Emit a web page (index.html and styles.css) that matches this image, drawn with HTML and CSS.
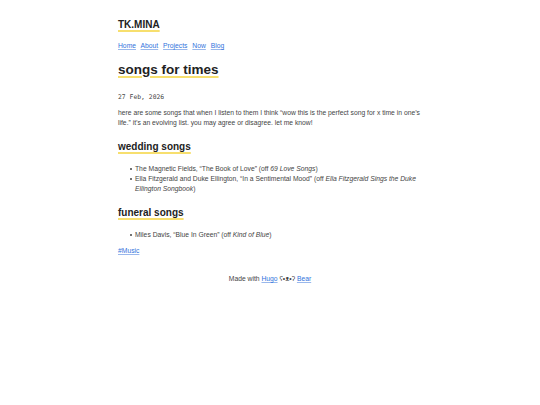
FILE: index.html
```html
<!DOCTYPE html>
<html lang="en">
<head>
<meta charset="utf-8">
<title>songs for times | TK.MINA</title>
<link rel="stylesheet" href="styles.css">
</head>
<body>
<header>
  <a class="title" href="#"><h2>TK.MINA</h2></a>
  <nav><p><a href="#">Home</a> <a href="#">About</a> <a href="#">Projects</a> <a href="#">Now</a> <a href="#">Blog</a></p></nav>
</header>
<main>
  <h1>songs for times</h1>
  <p class="date"><time>27 Feb, 2026</time></p>
  <div class="content">
    <p>here are some songs that when I listen to them I think “wow this is the perfect song for x time in one’s life.” it’s an evolving list. you may agree or disagree. let me know!</p>
    <h2>wedding songs</h2>
    <ul>
      <li>The Magnetic Fields, “The Book of Love” (off <em>69 Love Songs</em>)</li>
      <li>Ella Fitzgerald and Duke Ellington, “In a Sentimental Mood” (off <em>Ella Fitzgerald Sings the Duke Ellington Songbook</em>)</li>
    </ul>
    <h2>funeral songs</h2>
    <ul>
      <li>Miles Davis, “Blue In Green” (off <em>Kind of Blue</em>)</li>
    </ul>
  </div>
  <p class="tags"><a href="#">#Music</a></p>
</main>
<footer>Made with <a href="#">Hugo</a> ʕ•ᴥ•ʔ <a href="#">Bear</a></footer>
</body>
</html>
```
FILE: styles.css
```css
html { font-size: 6.75px; }
body {
  font-family: "Liberation Sans", Arial, sans-serif;
  font-size: 6.75px;
  margin: 0 auto;
  padding: 8.4px;
  max-width: 304px;
  line-height: 1.5;
  color: #444;
  background: #fff;
}
h1, h2, h3 { color: #222; text-decoration: underline; text-decoration-color: #f7df6e; text-decoration-thickness: 1.5px; text-underline-offset: 1.5px; }
a { color: #3273dc; text-decoration-color: #9ab8ec; }
.title { text-decoration: none; }
header h2 { font-size: 10px; margin: 8.3px 0 9.3px; }
nav p { margin: 6.75px 0; }
nav a { margin-right: 3px; }
h1 { font-size: 13.5px; margin: 9px 0 13px; }
main h2 { font-size: 10px; margin: 11.3px 0 9.3px; }
p { margin: 6.75px 0; }
.date { font-family: "DejaVu Sans Mono", monospace; font-size: 6.4px; margin: 13px 0 4.75px; }
.date + .content > p:first-child { margin-top: 4.75px; }
ul { padding-left: 17px; margin: 6.75px 0; list-style: none; }
li { position: relative; }
li::before { content: ""; position: absolute; left: -5px; top: 4.2px; width: 2px; height: 2px; border-radius: 50%; background: #444; }
em { font-style: italic; }
footer { text-align: center; padding: 11px 0 16px; }
```
